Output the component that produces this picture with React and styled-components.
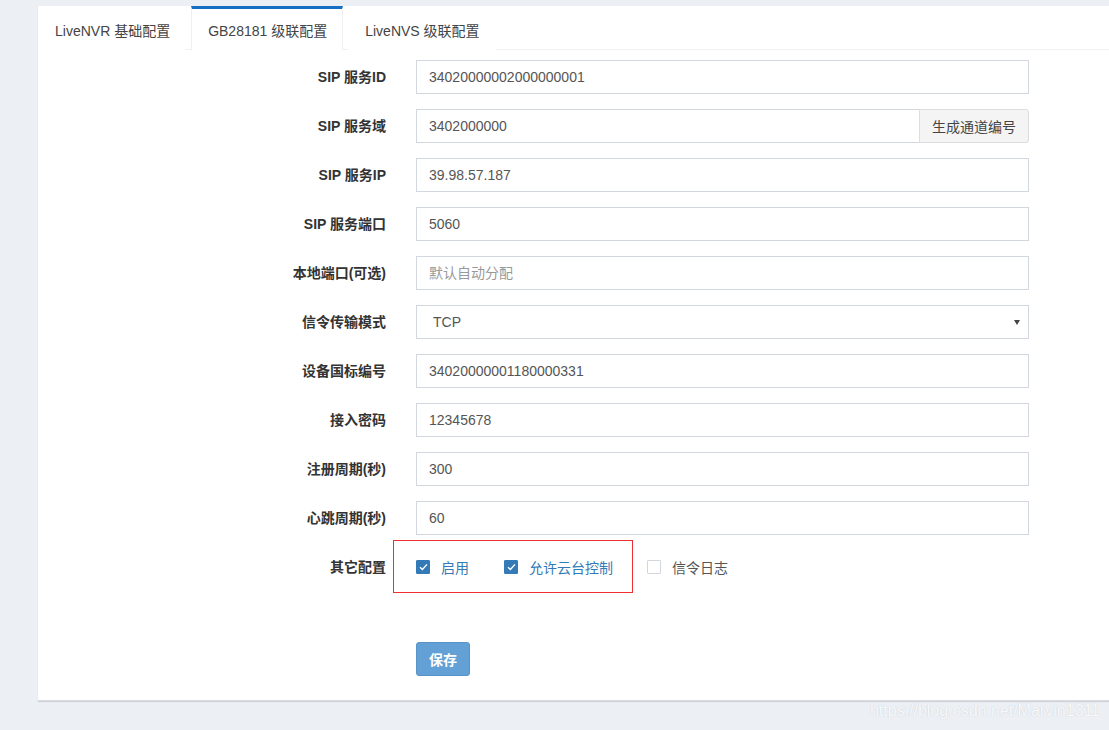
import React from "react";
import styled, { createGlobalStyle } from "styled-components";

const GlobalStyle = createGlobalStyle`
    html, body {
        margin: 0;
        padding: 0;
        background: #ecf0f5;
        font-family: "Liberation Sans", Arial, "Noto Sans CJK SC", sans-serif;
        font-size: 14px;
        color: #333;
        overflow: hidden;
    }
`

const Page = styled.div`
    width: 1109px;
    height: 730px;
    padding: 6px 0 0 38px;
    box-sizing: border-box;
    position: relative;
`

const Panel = styled.div`
    background: #fff;
    height: 695px;
    box-shadow: 0 1px 1px rgba(0, 0, 0, 0.12);
    border-bottom: 1px solid #d8dbe0;
    box-sizing: border-box;
`

const TabBar = styled.ul`
    display: flex;
    margin: 0;
    padding: 0;
    list-style: none;
    border-bottom: 1px solid #f0f0f0;
    height: 44px;
    box-sizing: border-box;
`

const Tab = styled.li`
    margin-right: 5px;
    padding: 0 15px 0 16px;
    display: flex;
    align-items: center;
    color: #444;
    font-size: 14px;
    border-top: 3px solid ${p => (p.active ? "#1570c4" : "transparent")};
    border-left: 1px solid ${p => (p.active ? "#f0f0f0" : "transparent")};
    border-right: 1px solid ${p => (p.active ? "#f0f0f0" : "transparent")};
    margin-bottom: -1px;
    background: #fff;
    box-sizing: border-box;
`

const Form = styled.div`
    display: grid;
    grid-template-columns: 348px 613px;
    column-gap: 30px;
    row-gap: 15px;
    padding-top: 10px;
`

const Label = styled.div`
    font-weight: bold;
    text-align: right;
    color: #333;
    height: 34px;
    line-height: 34px;
`

const Input = styled.div`
    height: 34px;
    border: 1px solid #d2d6de;
    box-sizing: border-box;
    padding: 0 12px;
    line-height: 32px;
    color: ${p => (p.placeholder ? "#999" : "#555")};
`

const InputGroup = styled.div`
    display: flex;
    height: 34px;
`

const GroupInput = styled(Input)`
    flex: 1;
    border-right: none;
`

const AddonButton = styled.div`
    width: 110px;
    box-sizing: border-box;
    border: 1px solid #ddd;
    background: #f4f4f4;
    color: #444;
    display: flex;
    align-items: center;
    justify-content: center;
    border-radius: 0 3px 3px 0;
`

const Select = styled(Input)`
    display: flex;
    align-items: center;
    justify-content: space-between;
    padding: 0 8px 0 16px;
`

const Arrow = styled.span`
    width: 0;
    height: 0;
    border-left: 3.5px solid transparent;
    border-right: 3.5px solid transparent;
    border-top: 5px solid #444;
    margin-top: 1px;
`

const CheckRow = styled.div`
    display: flex;
    align-items: center;
    height: 34px;
    position: relative;
`

const Highlight = styled.div`
    position: absolute;
    left: -23px;
    top: -10px;
    width: 240px;
    height: 53px;
    border: 1px solid #f03030;
    box-sizing: border-box;
    pointer-events: none;
`

const Check = styled.label`
    display: flex;
    align-items: center;
    margin-right: ${p => p.gap}px;
    color: ${p => (p.checked ? "#337ab7" : "#555")};
`

const Box = styled.span`
    width: 14px;
    height: 14px;
    box-sizing: border-box;
    border: 1px solid ${p => (p.checked ? "#337ab7" : "#d2d6de")};
    background: ${p => (p.checked ? "#337ab7" : "#fff")};
    border-radius: 1px;
    margin-right: 11px;
    display: flex;
    align-items: center;
    justify-content: center;
`

const SaveRow = styled.div`
    grid-column: 2;
    padding-top: 43px;
`

const SaveButton = styled.div`
    width: 54px;
    height: 34px;
    background: #62a0d5;
    border: 1px solid #5894c8;
    box-sizing: border-box;
    border-radius: 3px;
    color: #fff;
    font-weight: bold;
    display: flex;
    align-items: center;
    justify-content: center;
`

const Watermark = styled.div`
    position: absolute;
    right: 9px;
    bottom: 10px;
    font-size: 16px;
    color: rgba(255, 255, 255, 0.9);
    text-shadow: 0 0 1px rgba(170, 176, 188, 0.7);
`

function CheckBox({ checked, label, gap }) {
    return (
        <Check checked={checked} gap={gap}>
            <Box checked={checked}>
                {checked && (
                    <svg width="9" height="8" viewBox="0 0 9 8">
                        <path d="M1 4.2 L3.4 6.4 L8 1.4" fill="none" stroke="#fff" strokeWidth="1.4" />
                    </svg>
                )}
            </Box>
            {label}
        </Check>
    )
}

const fields = [
    ["SIP 服务ID", "34020000002000000001"],
    ["SIP 服务域", "3402000000", "group"],
    ["SIP 服务IP", "39.98.57.187"],
    ["SIP 服务端口", "5060"],
    ["本地端口(可选)", "默认自动分配", "placeholder"],
    ["信令传输模式", "TCP", "select"],
    ["设备国标编号", "34020000001180000331"],
    ["接入密码", "12345678"],
    ["注册周期(秒)", "300"],
    ["心跳周期(秒)", "60"],
]

export default function App() {
    return (
        <Page>
            <GlobalStyle />
            <Panel>
                <TabBar>
                    <Tab>LiveNVR 基础配置</Tab>
                    <Tab active>GB28181 级联配置</Tab>
                    <Tab>LiveNVS 级联配置</Tab>
                </TabBar>
                <Form>
                    {fields.map(([label, value, kind]) => (
                        <React.Fragment key={label}>
                            <Label>{label}</Label>
                            {kind === "group" ? (
                                <InputGroup>
                                    <GroupInput>{value}</GroupInput>
                                    <AddonButton>生成通道编号</AddonButton>
                                </InputGroup>
                            ) : kind === "select" ? (
                                <Select>
                                    {value}
                                    <Arrow />
                                </Select>
                            ) : (
                                <Input placeholder={kind === "placeholder"}>{value}</Input>
                            )}
                        </React.Fragment>
                    ))}
                    <Label>其它配置</Label>
                    <CheckRow>
                        <Highlight />
                        <CheckBox checked label="启用" gap={35} />
                        <CheckBox checked label="允许云台控制" gap={34} />
                        <CheckBox label="信令日志" gap={0} />
                    </CheckRow>
                    <SaveRow>
                        <SaveButton>保存</SaveButton>
                    </SaveRow>
                </Form>
            </Panel>
            <Watermark>https://blog.csdn.net/Marvin1311</Watermark>
        </Page>
    )
}
